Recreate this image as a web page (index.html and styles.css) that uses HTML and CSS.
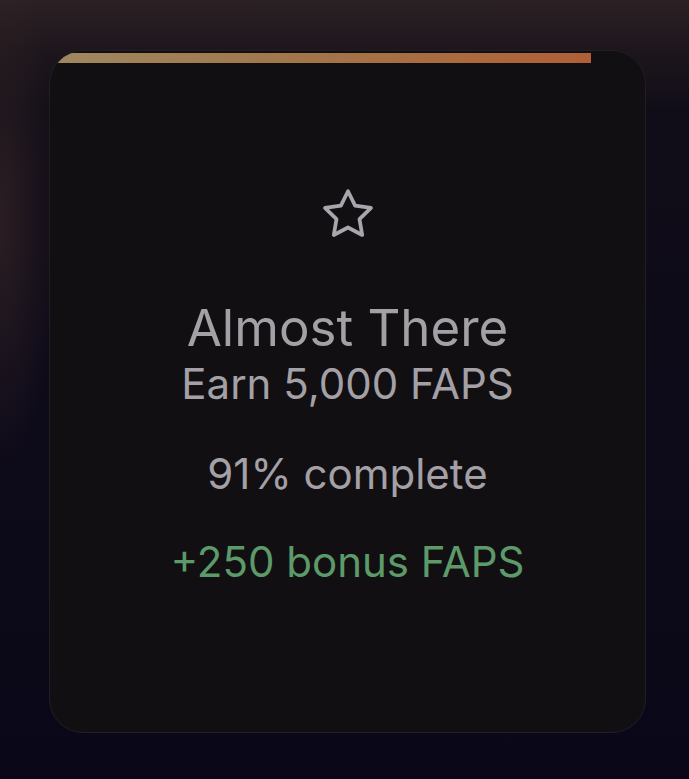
FILE: index.html
```html
<!DOCTYPE html>
<html lang="en">
<head>
<meta charset="utf-8">
<title>Achievement</title>
<link rel="stylesheet" href="styles.css">
</head>
<body>
<div class="stage">
  <div class="card">
    <div class="progress"><div class="progress-fill" style="width:91%"></div></div>
    <div class="content">
      <svg class="star" viewBox="0 0 24 24" width="62" height="62" fill="none" stroke="currentColor" stroke-width="1.45" stroke-linejoin="round" stroke-linecap="round">
        <path d="M12 2.8l2.75 5.57 6.15.9-4.45 4.34 1.05 6.12L12 16.84l-5.5 2.89 1.05-6.12L3.1 9.27l6.15-.9z"/>
      </svg>
      <div class="title">Almost There</div>
      <div class="subtitle">Earn 5,000 FAPS</div>
      <div class="percent">91% complete</div>
      <div class="bonus">+250 bonus FAPS</div>
    </div>
  </div>
</div>
</body>
</html>
```
FILE: styles.css
```css
html, body {
  margin: 0;
  padding: 0;
  height: 100%;
}
body {
  background:
    radial-gradient(ellipse 60px 260px at 0px 220px, rgba(70, 48, 44, 0.5), rgba(70, 48, 44, 0) 100%),
    linear-gradient(180deg, #2b2125 0px, #1d161c 50px, #110d18 110px, #0d0a19 400px, #0a0718 779px);
  font-family: Inter, "Noto Sans", "Liberation Sans", sans-serif;
  overflow: hidden;
}
.stage {
  padding: 50px 43px 0 49px;
}
.card {
  height: 683px;
  box-sizing: border-box;
  background: #120f13;
  border: 1.5px solid #221e24;
  border-radius: 34px;
  overflow: hidden;
  display: flex;
  flex-direction: column;
}
.progress {
  margin-top: 2px;
  height: 10px;
}
.progress-fill {
  height: 100%;
  background: linear-gradient(90deg, #a08860 0%, #a1764a 45%, #ab6a3f 75%, #b05f38 100%);
}
.content {
  display: flex;
  flex-direction: column;
  align-items: center;
  padding-top: 121px;
  color: #a3a0a6;
}
.star {
  display: block;
  color: #a9a5ac;
}
.title {
  margin-top: 54px;
  font-size: 51px;
  line-height: 56px;
}
.subtitle {
  margin-top: 2px;
  font-size: 42px;
  line-height: 52px;
}
.percent {
  margin-top: 38px;
  font-size: 42px;
  line-height: 52px;
}
.bonus {
  margin-top: 36px;
  font-size: 42px;
  line-height: 52px;
  color: #5c9a69;
}
```
